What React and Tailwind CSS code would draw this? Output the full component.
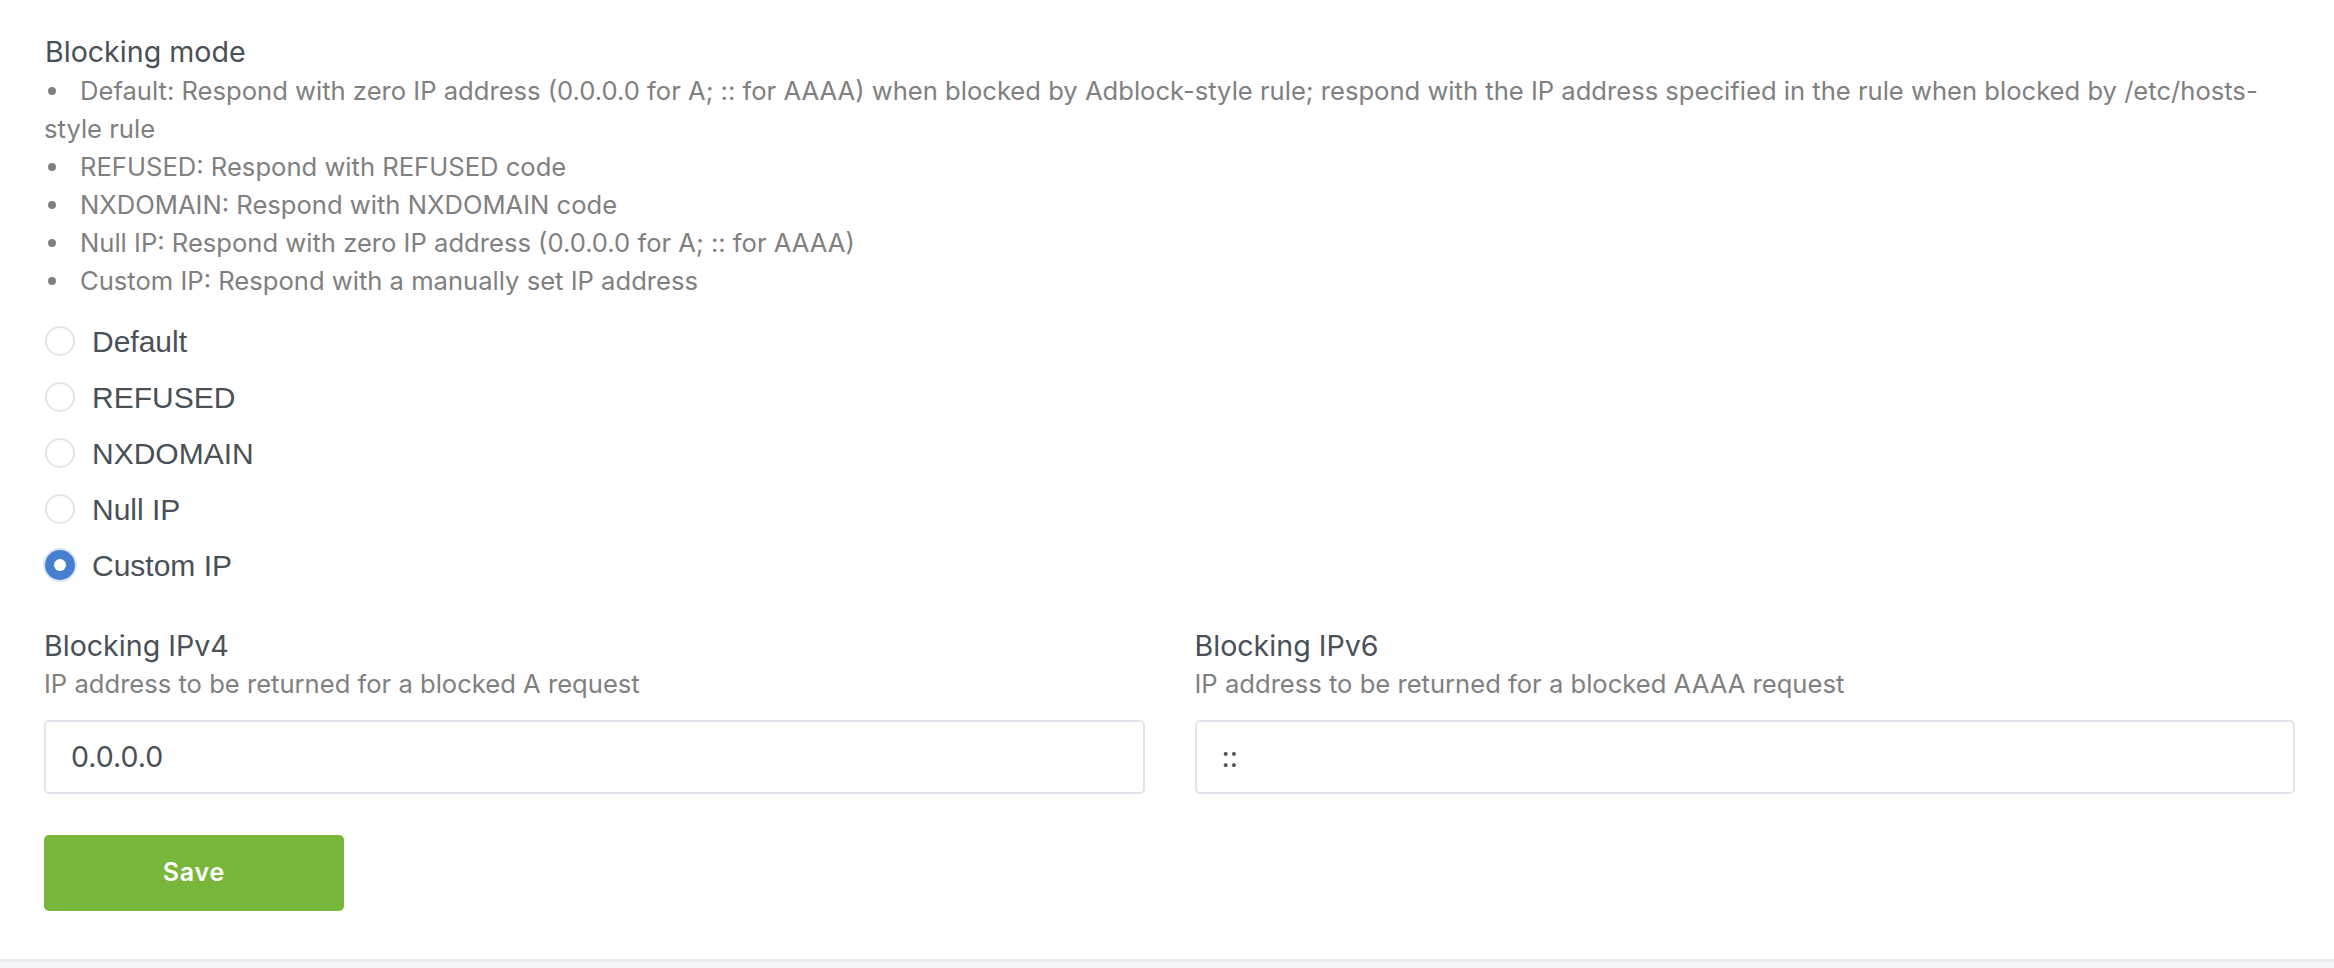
import { useState } from "react";

const modes = [
  { label: "Default" },
  { label: "REFUSED" },
  { label: "NXDOMAIN" },
  { label: "Null IP" },
  { label: "Custom IP" },
];

const hints = [
  "REFUSED: Respond with REFUSED code",
  "NXDOMAIN: Respond with NXDOMAIN code",
  "Null IP: Respond with zero IP address (0.0.0.0 for A; :: for AAAA)",
  "Custom IP: Respond with a manually set IP address",
];

function Dot() {
  return <span className="inline-block w-[8px] h-[8px] rounded-full bg-[#808080] align-middle ml-[4px] mr-[24px] relative -top-[2px]" />;
}

function Radio({ label, checked, onClick }) {
  return (
    <label className="flex items-center h-[56px] cursor-pointer" onClick={onClick}>
      {checked ? (
        <span className="w-[30px] h-[30px] rounded-full bg-[#467fcf] flex items-center justify-center shadow-[0_0_0_2px_rgba(70,127,207,0.2)] ml-[1px]">
          <span className="w-[12px] h-[12px] rounded-full bg-white" />
        </span>
      ) : (
        <span className="w-[30px] h-[30px] rounded-full border-2 border-[#e3e7ed] bg-white ml-[1px]" />
      )}
      <span className="ml-[17px] text-[30px] text-[#495057] font-['Liberation_Sans',Arial,sans-serif]">{label}</span>
    </label>
  );
}

function Field({ title, desc, value }) {
  return (
    <div>
      <div className="text-[28.6px] leading-[38px] text-[#495057]">{title}</div>
      <div className="text-[25.6px] leading-[38px] text-[#808080]">{desc}</div>
      <div className="mt-[17px] h-[74px] border-2 border-[#e0e5ec] rounded-[5px] flex items-center px-[25px] text-[28.5px] text-[#495057]">
        {value}
      </div>
    </div>
  );
}

export default function App() {
  const [mode, setMode] = useState(4);

  return (
    <div className="min-h-screen bg-[#f5f7fb] font-['Inter',sans-serif]">
      <div className="bg-white pl-[44px] pr-[39px] pt-[33px] pb-[48px] border-b-[3px] border-[#e9ecf2]">
        <div className="pl-[1px] text-[28.6px] leading-[38px] text-[#495057]">Blocking mode</div>
        <ul className="mt-[1px] text-[25.6px] leading-[38px] text-[#808080]">
          <li>
            <Dot />
            Default: Respond with zero IP address (0.0.0.0 for A; :: for AAAA) when blocked by Adblock-style rule; respond with the IP address specified in the rule when blocked by /etc/hosts-
            <br />
            style rule
          </li>
          {hints.map((h) => (
            <li key={h}>
              <Dot />
              {h}
            </li>
          ))}
        </ul>
        <div className="mt-[13px]">
          {modes.map((m, i) => (
            <Radio key={m.label} label={m.label} checked={mode === i} onClick={() => setMode(i)} />
          ))}
        </div>
        <div className="mt-[34px] grid grid-cols-2 gap-[50px]">
          <Field title="Blocking IPv4" desc="IP address to be returned for a blocked A request" value="0.0.0.0" />
          <Field title="Blocking IPv6" desc="IP address to be returned for a blocked AAAA request" value="::" />
        </div>
        <button className="mt-[41px] w-[300px] h-[76px] rounded-[5px] bg-[#78b73a] text-white text-[25px] font-semibold tracking-[0.8px]">
          Save
        </button>
      </div>
    </div>
  );
}
